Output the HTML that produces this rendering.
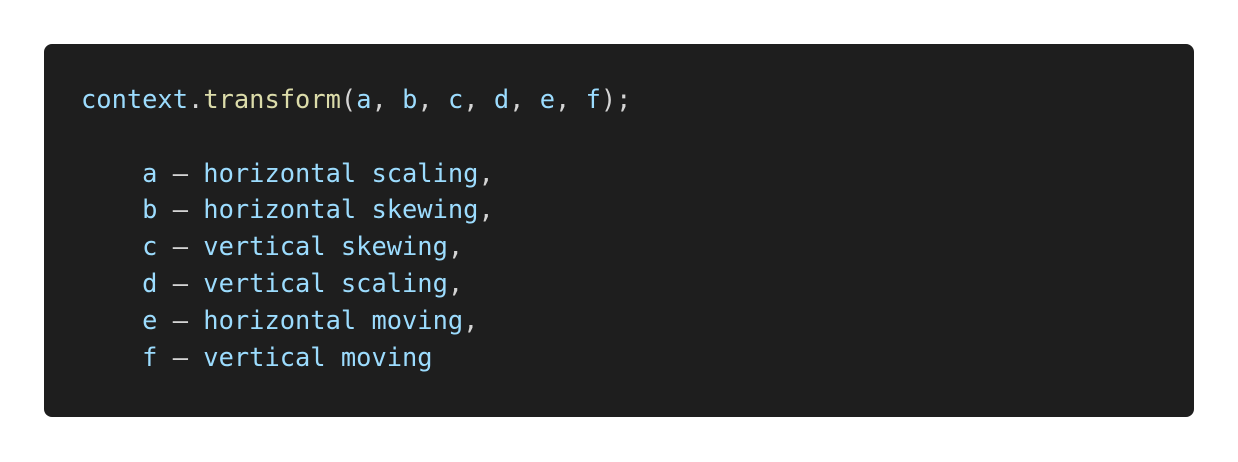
<!DOCTYPE html>
<html><head><meta charset="utf-8"><style>
html,body{margin:0;padding:0;background:#fff;width:1238px;height:462px;overflow:hidden}
.box{position:absolute;left:44px;top:44px;width:1150px;height:373px;background:#1e1e1e;border-radius:8px}
pre{position:absolute;left:37px;top:37px;margin:0;font-family:"DejaVu Sans Mono","Liberation Mono",monospace;font-size:25.4px;line-height:36.8px;color:#9cdcfe;white-space:pre}
.f{color:#dcdcaa}.p{color:#d4d4d4}
</style></head><body>
<div class="box"><pre>context<span class="p">.</span><span class="f">transform</span><span class="p">(</span>a<span class="p">,</span> b<span class="p">,</span> c<span class="p">,</span> d<span class="p">,</span> e<span class="p">,</span> f<span class="p">);</span>

    a <span class="p">—</span> horizontal scaling<span class="p">,</span>
    b <span class="p">—</span> horizontal skewing<span class="p">,</span>
    c <span class="p">—</span> vertical skewing<span class="p">,</span>
    d <span class="p">—</span> vertical scaling<span class="p">,</span>
    e <span class="p">—</span> horizontal moving<span class="p">,</span>
    f <span class="p">—</span> vertical moving</pre></div>
</body></html>
